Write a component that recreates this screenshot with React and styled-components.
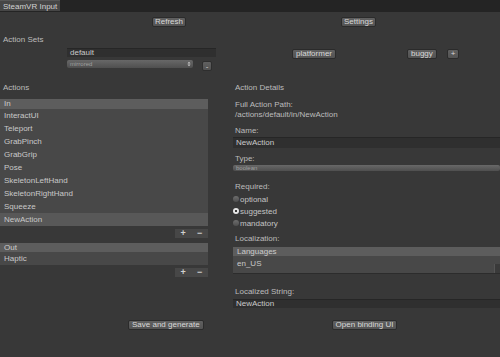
import styled, { createGlobalStyle } from "styled-components";

const GlobalStyle = createGlobalStyle`
  html, body {
    margin: 0;
    padding: 0;
    background: #383838;
  }
  body {
    font-family: "Liberation Sans", Arial, sans-serif;
    font-size: 8px;
    color: #bcbcbc;
  }
`;

const Window = styled.div`
  width: 500px;
  height: 357px;
  overflow: hidden;
  display: flex;
  flex-direction: column;
  background: #383838;
`;

const TopBar = styled.div`
  height: 12px;
  background: #242424;
  display: flex;
  align-items: flex-start;
`;

const Tab = styled.div`
  width: 60px;
  height: 11px;
  box-sizing: border-box;
  padding-left: 3px;
  line-height: 11px;
  background: #464646;
  border-top: 1px solid #575757;
  color: #d2d2d2;
`;

const Toolbar = styled.div`
  display: flex;
  margin-top: 5px;
  padding-left: 152px;
  gap: 155px;
`;

const Button = styled.div`
  height: 10px;
  box-sizing: border-box;
  padding: 0 ${(p) => p.$pad || 3}px;
  background: linear-gradient(#606060, #535353);
  border: 1px solid #2b2b2b;
  border-radius: 2px;
  color: #d8d8d8;
  line-height: 8px;
  white-space: nowrap;
  margin-top: ${(p) => p.$mt || 0}px;
  margin-left: ${(p) => p.$ml || 0}px;
`;

const Label = styled.div`
  line-height: 10px;
  height: 10px;
  white-space: nowrap;
  margin-top: ${(p) => p.$mt || 0}px;
  padding-left: ${(p) => p.$pl || 0}px;
`;

const SetsRow = styled.div`
  display: flex;
  align-items: flex-start;
  margin-top: 3px;
  padding-left: 67px;
`;

const SetColumn = styled.div`
  width: 149px;
  display: flex;
  flex-direction: column;
  gap: 3px;
`;

const Field = styled.div`
  height: ${(p) => p.$h || 9}px;
  box-sizing: border-box;
  padding-left: 3px;
  line-height: ${(p) => (p.$h || 9) - 1}px;
  background: #2f2f2f;
  border-top: 1px solid #262626;
  color: #cacaca;
  margin-top: ${(p) => p.$mt || 0}px;
`;

const DropRow = styled.div`
  display: flex;
  align-items: flex-start;
  gap: 9px;
`;

const Dropdown = styled.div`
  width: ${(p) => p.$w || "auto"};
  flex: ${(p) => (p.$w ? "none" : 1)};
  height: 8px;
  box-sizing: border-box;
  display: flex;
  align-items: center;
  justify-content: space-between;
  padding: 0 2px 0 3px;
  background: linear-gradient(#686868, #4f4f4f);
  border-radius: 2px;
  color: #a0a0a0;
  font-size: 6px;
  margin-top: ${(p) => p.$mt || 0}px;
`;

const SmallButton = styled.div`
  width: 10px;
  height: 10px;
  box-sizing: border-box;
  margin-top: 1px;
  background: linear-gradient(#606060, #525252);
  border: 1px solid #2e2e2e;
  border-radius: 2px;
  display: flex;
  align-items: center;
  justify-content: center;
  color: #d0d0d0;
  font-size: 8px;
`;

const Main = styled.div`
  display: flex;
  margin-top: 12px;
`;

const LeftColumn = styled.div`
  width: 208px;
  display: flex;
  flex-direction: column;
`;

const RightColumn = styled.div`
  flex: 1;
  margin-left: 25px;
  display: flex;
  flex-direction: column;
`;

const List = styled.div`
  background: #484848;
  margin-top: ${(p) => p.$mt || 0}px;
`;

const ListHeader = styled.div`
  height: ${(p) => p.$h || 10}px;
  line-height: ${(p) => p.$h || 10}px;
  padding-left: 4px;
  background: #5d5d5d;
  color: #cccccc;
`;

const ListRow = styled.div`
  height: 13px;
  line-height: 13px;
  padding-left: 4px;
  background: ${(p) => (p.$selected ? "#585858" : "transparent")};
  color: #c8c8c8;
`;

const ListFooter = styled.div`
  align-self: flex-end;
  width: 33px;
  height: 9px;
  margin-top: 3px;
  background: #474747;
  display: flex;
  justify-content: space-around;
  align-items: center;
  color: #d0d0d0;
  font-size: 9px;
  font-weight: bold;
  line-height: 9px;
`;

const RadioRow = styled.div`
  height: 12px;
  display: flex;
  align-items: center;
  margin-top: ${(p) => p.$mt || 0}px;
  color: #c4c4c4;
`;

const Radio = styled.span`
  width: 6px;
  height: 6px;
  border-radius: 50%;
  box-sizing: border-box;
  margin-right: 1px;
  background: ${(p) =>
    p.$on ? "radial-gradient(#3a3a3a 0 1px, #e6e6e6 1.5px)" : "linear-gradient(#6e6e6e, #4e4e4e)"};
`;

const LocBox = styled.div`
  margin-top: 3px;
  background: #484848;
  border-bottom: 1px solid #2c2c2c;
`;

const LocBody = styled.div`
  height: 17px;
  display: flex;
  align-items: flex-start;
  justify-content: space-between;
`;

const LocText = styled.span`
  line-height: 15px;
  padding-left: 4px;
  color: #c8c8c8;
`;

const ScrollStub = styled.span`
  width: 5px;
  height: 9px;
  margin-top: 8px;
  background: #3a3a3a;
  border-left: 1px solid #555;
`;

const BottomRow = styled.div`
  display: flex;
  margin-top: 12px;
  padding-left: 128px;
  gap: 128px;
`;

const Arrows = () => (
  <svg width="4" height="6" viewBox="0 0 4 6">
    <path d="M0.5 2.5 L2 0.8 L3.5 2.5 Z M0.5 3.5 L2 5.2 L3.5 3.5 Z" fill="#d0d0d0" />
  </svg>
);

const IN_ACTIONS = [
  "InteractUI",
  "Teleport",
  "GrabPinch",
  "GrabGrip",
  "Pose",
  "SkeletonLeftHand",
  "SkeletonRightHand",
  "Squeeze",
  "NewAction",
];

const REQUIRED = [
  { name: "optional", on: false },
  { name: "suggested", on: true },
  { name: "mandatory", on: false },
];

const App = () => {
  return (
    <Window>
      <GlobalStyle />
      <TopBar>
        <Tab>SteamVR Input</Tab>
      </TopBar>

      <Toolbar>
        <Button $pad={2}>Refresh</Button>
        <Button $pad={2}>Settings</Button>
      </Toolbar>

      <Label $mt={8} $pl={3}>Action Sets</Label>
      <SetsRow>
        <SetColumn>
          <Field>default</Field>
          <DropRow>
            <Dropdown $w="126px">
              <span>mirrored</span>
              <Arrows />
            </Dropdown>
            <SmallButton>-</SmallButton>
          </DropRow>
        </SetColumn>
        <Button $mt={1} $ml={76}>platformer</Button>
        <Button $mt={1} $ml={71}>buggy</Button>
        <Button $mt={1} $ml={10}>+</Button>
      </SetsRow>

      <Main>
        <LeftColumn>
          <Label $pl={3}>Actions</Label>
          <List $mt={6}>
            <ListHeader>In</ListHeader>
            {IN_ACTIONS.map((name) => (
              <ListRow key={name} $selected={name === "NewAction"}>
                {name}
              </ListRow>
            ))}
          </List>
          <ListFooter>
            <span>+</span>
            <span>−</span>
          </ListFooter>
          <List $mt={5}>
            <ListHeader $h={9}>Out</ListHeader>
            <ListRow>Haptic</ListRow>
          </List>
          <ListFooter>
            <span>+</span>
            <span>−</span>
          </ListFooter>
        </LeftColumn>

        <RightColumn>
          <Label $pl={2}>Action Details</Label>
          <Label $mt={7} $pl={2}>Full Action Path:</Label>
          <Label $pl={2}>/actions/default/in/NewAction</Label>
          <Label $mt={6} $pl={2}>Name:</Label>
          <Field $h={11} $mt={1}>NewAction</Field>
          <Label $mt={6} $pl={2}>Type:</Label>
          <Dropdown $mt={1}>
            <span>boolean</span>
          </Dropdown>
          <Label $mt={11} $pl={2}>Required:</Label>
          {REQUIRED.map((r, i) => (
            <RadioRow key={r.name} $mt={i === 0 ? 1 : 0}>
              <Radio $on={r.on} />
              {r.name}
            </RadioRow>
          ))}
          <Label $mt={5} $pl={2}>Localization:</Label>
          <LocBox>
            <ListHeader $h={9}>Languages</ListHeader>
            <LocBody>
              <LocText>en_US</LocText>
              <ScrollStub />
            </LocBody>
          </LocBox>
          <Label $mt={13} $pl={2}>Localized String:</Label>
          <Field $mt={2}>NewAction</Field>
        </RightColumn>
      </Main>

      <BottomRow>
        <Button $pad={3}>Save and generate</Button>
        <Button $pad={3}>Open binding UI</Button>
      </BottomRow>
    </Window>
  );
};

export default App;
